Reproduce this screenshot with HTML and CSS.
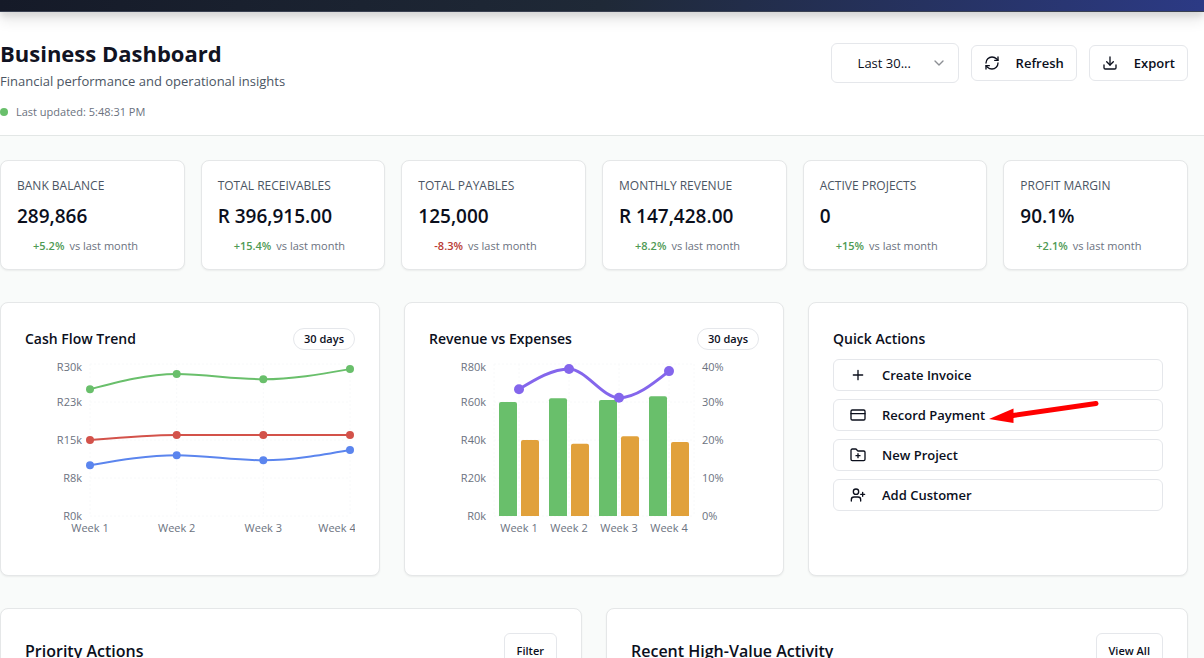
FILE: index.html
```html
<!DOCTYPE html>
<html lang="en">
<head>
<meta charset="utf-8">
<meta name="viewport" content="width=device-width, initial-scale=1">
<title>Business Dashboard</title>
<link rel="stylesheet" href="styles.css">
</head>
<body>
<div class="topbar"></div>
<header class="page-header">
  <div class="intro">
    <h1 class="title">Business Dashboard</h1>
    <p class="subtitle">Financial performance and operational insights</p>
    <p class="updated"><span class="dot"></span>Last updated: 5:48:31 PM</p>
  </div>
  <div class="controls">
    <div class="period">
      <select class="period-select" aria-label="Period"><option>Last 30...</option></select>
      <svg class="icon chevron" viewBox="0 0 24 24"><path d="m6 9 6 6 6-6"/></svg>
    </div>
    <button class="btn btn-tool" type="button">
      <svg class="icon" viewBox="0 0 24 24"><path d="M3 12a9 9 0 0 1 9-9 9.75 9.75 0 0 1 6.74 2.74L21 8"/><path d="M21 3v5h-5"/><path d="M21 12a9 9 0 0 1-9 9 9.75 9.75 0 0 1-6.74-2.74L3 16"/><path d="M8 16H3v5"/></svg>
      Refresh
    </button>
    <button class="btn btn-tool" type="button">
      <svg class="icon" viewBox="0 0 24 24"><path d="M21 15v4a2 2 0 0 1-2 2H5a2 2 0 0 1-2-2v-4"/><path d="m7 10 5 5 5-5"/><path d="M12 15V3"/></svg>
      Export
    </button>
  </div>
</header>
<main class="content">
  <section class="metrics">
    <article class="card metric"><h2 class="metric-label">BANK BALANCE</h2><p class="metric-value">289,866</p><p class="metric-trend"><span class="up">+5.2%</span> vs last month</p></article>
    <article class="card metric"><h2 class="metric-label">TOTAL RECEIVABLES</h2><p class="metric-value">R 396,915.00</p><p class="metric-trend"><span class="up">+15.4%</span> vs last month</p></article>
    <article class="card metric"><h2 class="metric-label">TOTAL PAYABLES</h2><p class="metric-value">125,000</p><p class="metric-trend"><span class="down">-8.3%</span> vs last month</p></article>
    <article class="card metric"><h2 class="metric-label">MONTHLY REVENUE</h2><p class="metric-value">R 147,428.00</p><p class="metric-trend"><span class="up">+8.2%</span> vs last month</p></article>
    <article class="card metric"><h2 class="metric-label">ACTIVE PROJECTS</h2><p class="metric-value">0</p><p class="metric-trend"><span class="up">+15%</span> vs last month</p></article>
    <article class="card metric"><h2 class="metric-label">PROFIT MARGIN</h2><p class="metric-value">90.1%</p><p class="metric-trend"><span class="up">+2.1%</span> vs last month</p></article>
  </section>

  <section class="panels">
    <article class="card panel">
      <div class="panel-head"><h2 class="panel-title">Cash Flow Trend</h2><span class="badge">30 days</span></div>
      <svg class="chart" viewBox="0 0 330 192" role="img" aria-label="Cash flow by week">
        <path class="grid" d="M65 5H325M65 43H325M65 81H325M65 119H325M65 157H325M65 5V157M151.7 5V157M238.3 5V157M325 5V157"/>
        <g class="tick end"><text x="57" y="12">R30k</text><text x="57" y="47">R23k</text><text x="57" y="85">R15k</text><text x="57" y="123">R8k</text><text x="57" y="161">R0k</text></g>
        <g class="tick mid"><text x="65" y="173">Week 1</text><text x="151.7" y="173">Week 2</text><text x="238.3" y="173">Week 3</text><text x="312" y="173">Week 4</text></g>
        <g class="series income">
          <path d="M65 30.3C93.9 22.7 122.8 15.1 151.7 15.1C180.6 15.1 209.4 20.2 238.3 20.2C267.2 20.2 296.1 15.1 325 10.1"/>
          <circle cx="65" cy="30.3" r="4"/><circle cx="151.7" cy="15.1" r="4"/><circle cx="238.3" cy="20.2" r="4"/><circle cx="325" cy="10.1" r="4"/>
        </g>
        <g class="series outgoing">
          <path d="M65 81C93.9 78.5 122.8 75.9 151.7 75.9H325"/>
          <circle cx="65" cy="81" r="4"/><circle cx="151.7" cy="75.9" r="4"/><circle cx="238.3" cy="75.9" r="4"/><circle cx="325" cy="75.9" r="4"/>
        </g>
        <g class="series net">
          <path d="M65 106.3C93.9 101.3 122.8 96.2 151.7 96.2C180.6 96.2 209.4 101.3 238.3 101.3C267.2 101.3 296.1 96.2 325 91.1"/>
          <circle cx="65" cy="106.3" r="4"/><circle cx="151.7" cy="96.2" r="4"/><circle cx="238.3" cy="101.3" r="4"/><circle cx="325" cy="91.1" r="4"/>
        </g>
      </svg>
    </article>

    <article class="card panel">
      <div class="panel-head"><h2 class="panel-title">Revenue vs Expenses</h2><span class="badge">30 days</span></div>
      <svg class="chart" viewBox="0 0 330 192" role="img" aria-label="Revenue, expenses and margin by week">
        <path class="grid" d="M65 5H265M65 43H265M65 81H265M65 119H265M65 157H265M65 5V157M90 5V157M140 5V157M190 5V157M240 5V157M265 5V157"/>
        <g class="tick end"><text x="57" y="12">R80k</text><text x="57" y="47">R60k</text><text x="57" y="85">R40k</text><text x="57" y="123">R20k</text><text x="57" y="161">R0k</text></g>
        <g class="tick"><text x="273" y="12">40%</text><text x="273" y="47">30%</text><text x="273" y="85">20%</text><text x="273" y="123">10%</text><text x="273" y="161">0%</text></g>
        <g class="tick mid"><text x="90" y="173">Week 1</text><text x="140" y="173">Week 2</text><text x="190" y="173">Week 3</text><text x="240" y="173">Week 4</text></g>
        <g class="revenue">
          <path d="M70 157V45q0-2 2-2h14q2 0 2 2V157z"/><path d="M120 157V41.2q0-2 2-2h14q2 0 2 2V157z"/><path d="M170 157V43.1q0-2 2-2h14q2 0 2 2V157z"/><path d="M220 157V39.3q0-2 2-2h14q2 0 2 2V157z"/>
        </g>
        <g class="expenses">
          <path d="M92 157V83q0-2 2-2h14q2 0 2 2V157z"/><path d="M142 157V86.8q0-2 2-2h14q2 0 2 2V157z"/><path d="M192 157V79.2q0-2 2-2h14q2 0 2 2V157z"/><path d="M242 157V84.9q0-2 2-2h14q2 0 2 2V157z"/>
        </g>
        <g class="series margin">
          <path d="M90 30.3C106.7 20.2 123.3 10 140 10C156.7 10 173.3 38.7 190 38.7C206.7 38.7 223.3 25.4 240 12.1"/>
          <circle cx="90" cy="30.3" r="5"/><circle cx="140" cy="10" r="5"/><circle cx="190" cy="38.7" r="5"/><circle cx="240" cy="12.1" r="5"/>
        </g>
      </svg>
    </article>

    <article class="card panel">
      <div class="panel-head"><h2 class="panel-title">Quick Actions</h2></div>
      <div class="actions">
        <button class="btn action" type="button"><svg class="icon" viewBox="0 0 24 24"><path d="M5 12h14M12 5v14"/></svg>Create Invoice</button>
        <div class="action-marked">
          <button class="btn action" type="button"><svg class="icon" viewBox="0 0 24 24"><rect x="1.5" y="4.5" width="21" height="15" rx="2"/><path d="M1.5 10h21"/></svg>Record Payment</button>
          <svg class="pointer" viewBox="0 0 112 26" aria-hidden="true"><path class="pointer-shaft" d="M24 16.500 107 4.500"/><path class="pointer-head" d="M0 20 24.500 9.500V24z"/></svg>
        </div>
        <button class="btn action" type="button"><svg class="icon" viewBox="0 0 24 24"><path d="M12 10v6M9 13h6"/><path d="M20.500 20.500a2 2 0 0 0 2-2V8a2 2 0 0 0-2-2h-8a2 2 0 0 1-1.700-.9L10 3.900A2 2 0 0 0 8.300 3H3.500a2 2 0 0 0-2 2v13.500a2 2 0 0 0 2 2Z"/></svg>New Project</button>
        <button class="btn action" type="button"><svg class="icon" viewBox="0 0 24 24"><path d="M16 21v-2a4 4 0 0 0-4-4H6a4 4 0 0 0-4 4v2"/><circle cx="9" cy="7" r="4"/><path d="M19 8v6M22 11h-6"/></svg>Add Customer</button>
      </div>
    </article>
  </section>

  <section class="lists">
    <article class="card list"><h2 class="list-title">Priority Actions</h2><button class="btn btn-small" type="button">Filter</button></article>
    <article class="card list"><h2 class="list-title">Recent High-Value Activity</h2><button class="btn btn-small" type="button">View All</button></article>
  </section>
</main>
</body>
</html>
```
FILE: styles.css
```css
* { box-sizing: border-box; }

body {
  margin: 0;
  background: #f9fbfa;
  color: #0b0f1c;
  font-family: "Open Sans", "Noto Sans", sans-serif;
  font-size: 13px;
  line-height: 20px;
}

h1, h2, p { margin: 0; }

.topbar {
  position: relative;
  height: 12px;
  background: linear-gradient(100deg, #151a28, #1f2937 50%, #2c3a85);
  border-bottom: 1px solid #3a4152;
  box-shadow: 0 4px 6px rgba(0, 0, 0, .1), 0 8px 14px rgba(0, 0, 0, .1);
}

.page-header {
  display: flex;
  justify-content: space-between;
  align-items: flex-start;
  padding: 24px 16px 15px 0;
  background: #fff;
  border-bottom: 1px solid #e3e7e6;
}

.title { font-size: 22px; line-height: 34px; font-weight: 700; color: #111322; }
.subtitle { margin-top: 1px; font-size: 13px; color: #4b5563; }
.updated {
  display: flex;
  align-items: center;
  gap: 8px;
  margin-top: 12px;
  font-size: 11px;
  line-height: 17px;
  color: #6b7280;
}
.dot { width: 8px; height: 8px; border-radius: 50%; background: #69bf6b; }

.controls { display: flex; align-items: center; gap: 12px; padding-top: 7px; }
.period { position: relative; }
.period-select {
  appearance: none;
  display: block;
  width: 128px;
  height: 40px;
  padding: 0 36px 0 26px;
  border: 1px solid #e5e7eb;
  border-radius: 6px;
  background: #fff;
  color: inherit;
  font: inherit;
}

.icon {
  flex: none;
  width: 16px;
  height: 16px;
  fill: none;
  stroke: currentColor;
  stroke-width: 2;
  stroke-linecap: round;
  stroke-linejoin: round;
}
.chevron {
  position: absolute;
  top: 12px;
  right: 12px;
  color: #8c8f94;
  pointer-events: none;
}

.btn {
  display: flex;
  align-items: center;
  gap: 16px;
  padding: 0 12px;
  border: 1px solid #e5e7eb;
  border-radius: 6px;
  background: #fff;
  color: inherit;
  font: inherit;
  font-weight: 600;
  white-space: nowrap;
}
.btn-tool { height: 36px; }
.btn-small { height: 36px; font-size: 11px; }

.card {
  background: #fff;
  border: 1px solid #e5e7e8;
  border-radius: 8px;
  box-shadow: 0 1px 2px rgba(0, 0, 0, .06);
}

.content {
  display: grid;
  gap: 32px;
  padding: 24px 16px 24px 0;
}

.metrics { display: grid; grid-template-columns: repeat(6, 1fr); gap: 16px; }
.metric { padding: 16px 16px 15px; }
.metric-label { font-size: 12px; line-height: 18px; font-weight: 500; color: #4b5563; }
.metric-value { margin-top: 6px; font-size: 19px; line-height: 30px; font-weight: 600; }
.metric-trend {
  display: flex;
  gap: 5px;
  margin-top: 7px;
  padding-left: 16px;
  font-size: 11px;
  line-height: 16px;
  color: #6b7280;
}
.up { color: #4f9a54; font-weight: 600; }
.down { color: #b93a32; font-weight: 600; }

.panels { display: grid; grid-template-columns: repeat(3, 1fr); gap: 24px; }
.panel { padding: 24px; }
.panel-head {
  display: flex;
  align-items: center;
  justify-content: space-between;
  height: 24px;
  margin-bottom: 8px;
}
.panel-title { font-size: 14px; line-height: 24px; font-weight: 600; }
.badge {
  padding: 2px 10px;
  border: 1px solid #e5e7eb;
  border-radius: 11px;
  font-size: 11px;
  line-height: 16px;
  font-weight: 600;
}

.chart { display: block; width: 100%; height: 192px; }
.grid { fill: none; stroke: #f8f9fa; stroke-dasharray: 2 2; }
.tick { fill: #6b7280; font-size: 11px; }
.end { text-anchor: end; }
.mid { text-anchor: middle; }
.series path { fill: none; stroke: currentColor; stroke-width: 2; }
.series circle { fill: currentColor; }
.income { color: #69bf6b; }
.outgoing { color: #d3524a; }
.net { color: #5b85ee; }
.margin { color: #8466ec; }
.margin path { stroke-width: 3; }
.revenue { fill: #69bf6b; }
.expenses { fill: #e1a13b; }

.actions { display: grid; gap: 8px; }
.action { width: 100%; height: 32px; padding: 0 16px; }
.action-marked { position: relative; }
.pointer {
  position: absolute;
  top: 0;
  left: 156px;
  width: 112px;
  height: 26px;
  pointer-events: none;
}
.pointer-shaft { stroke: #f00; stroke-width: 5; stroke-linecap: round; }
.pointer-head { fill: #f00; }

.lists { display: grid; grid-template-columns: repeat(2, 1fr); gap: 24px; }
.list {
  display: flex;
  align-items: center;
  justify-content: space-between;
  padding: 24px;
}
.list-title { font-size: 16px; line-height: 28px; font-weight: 600; }
```
